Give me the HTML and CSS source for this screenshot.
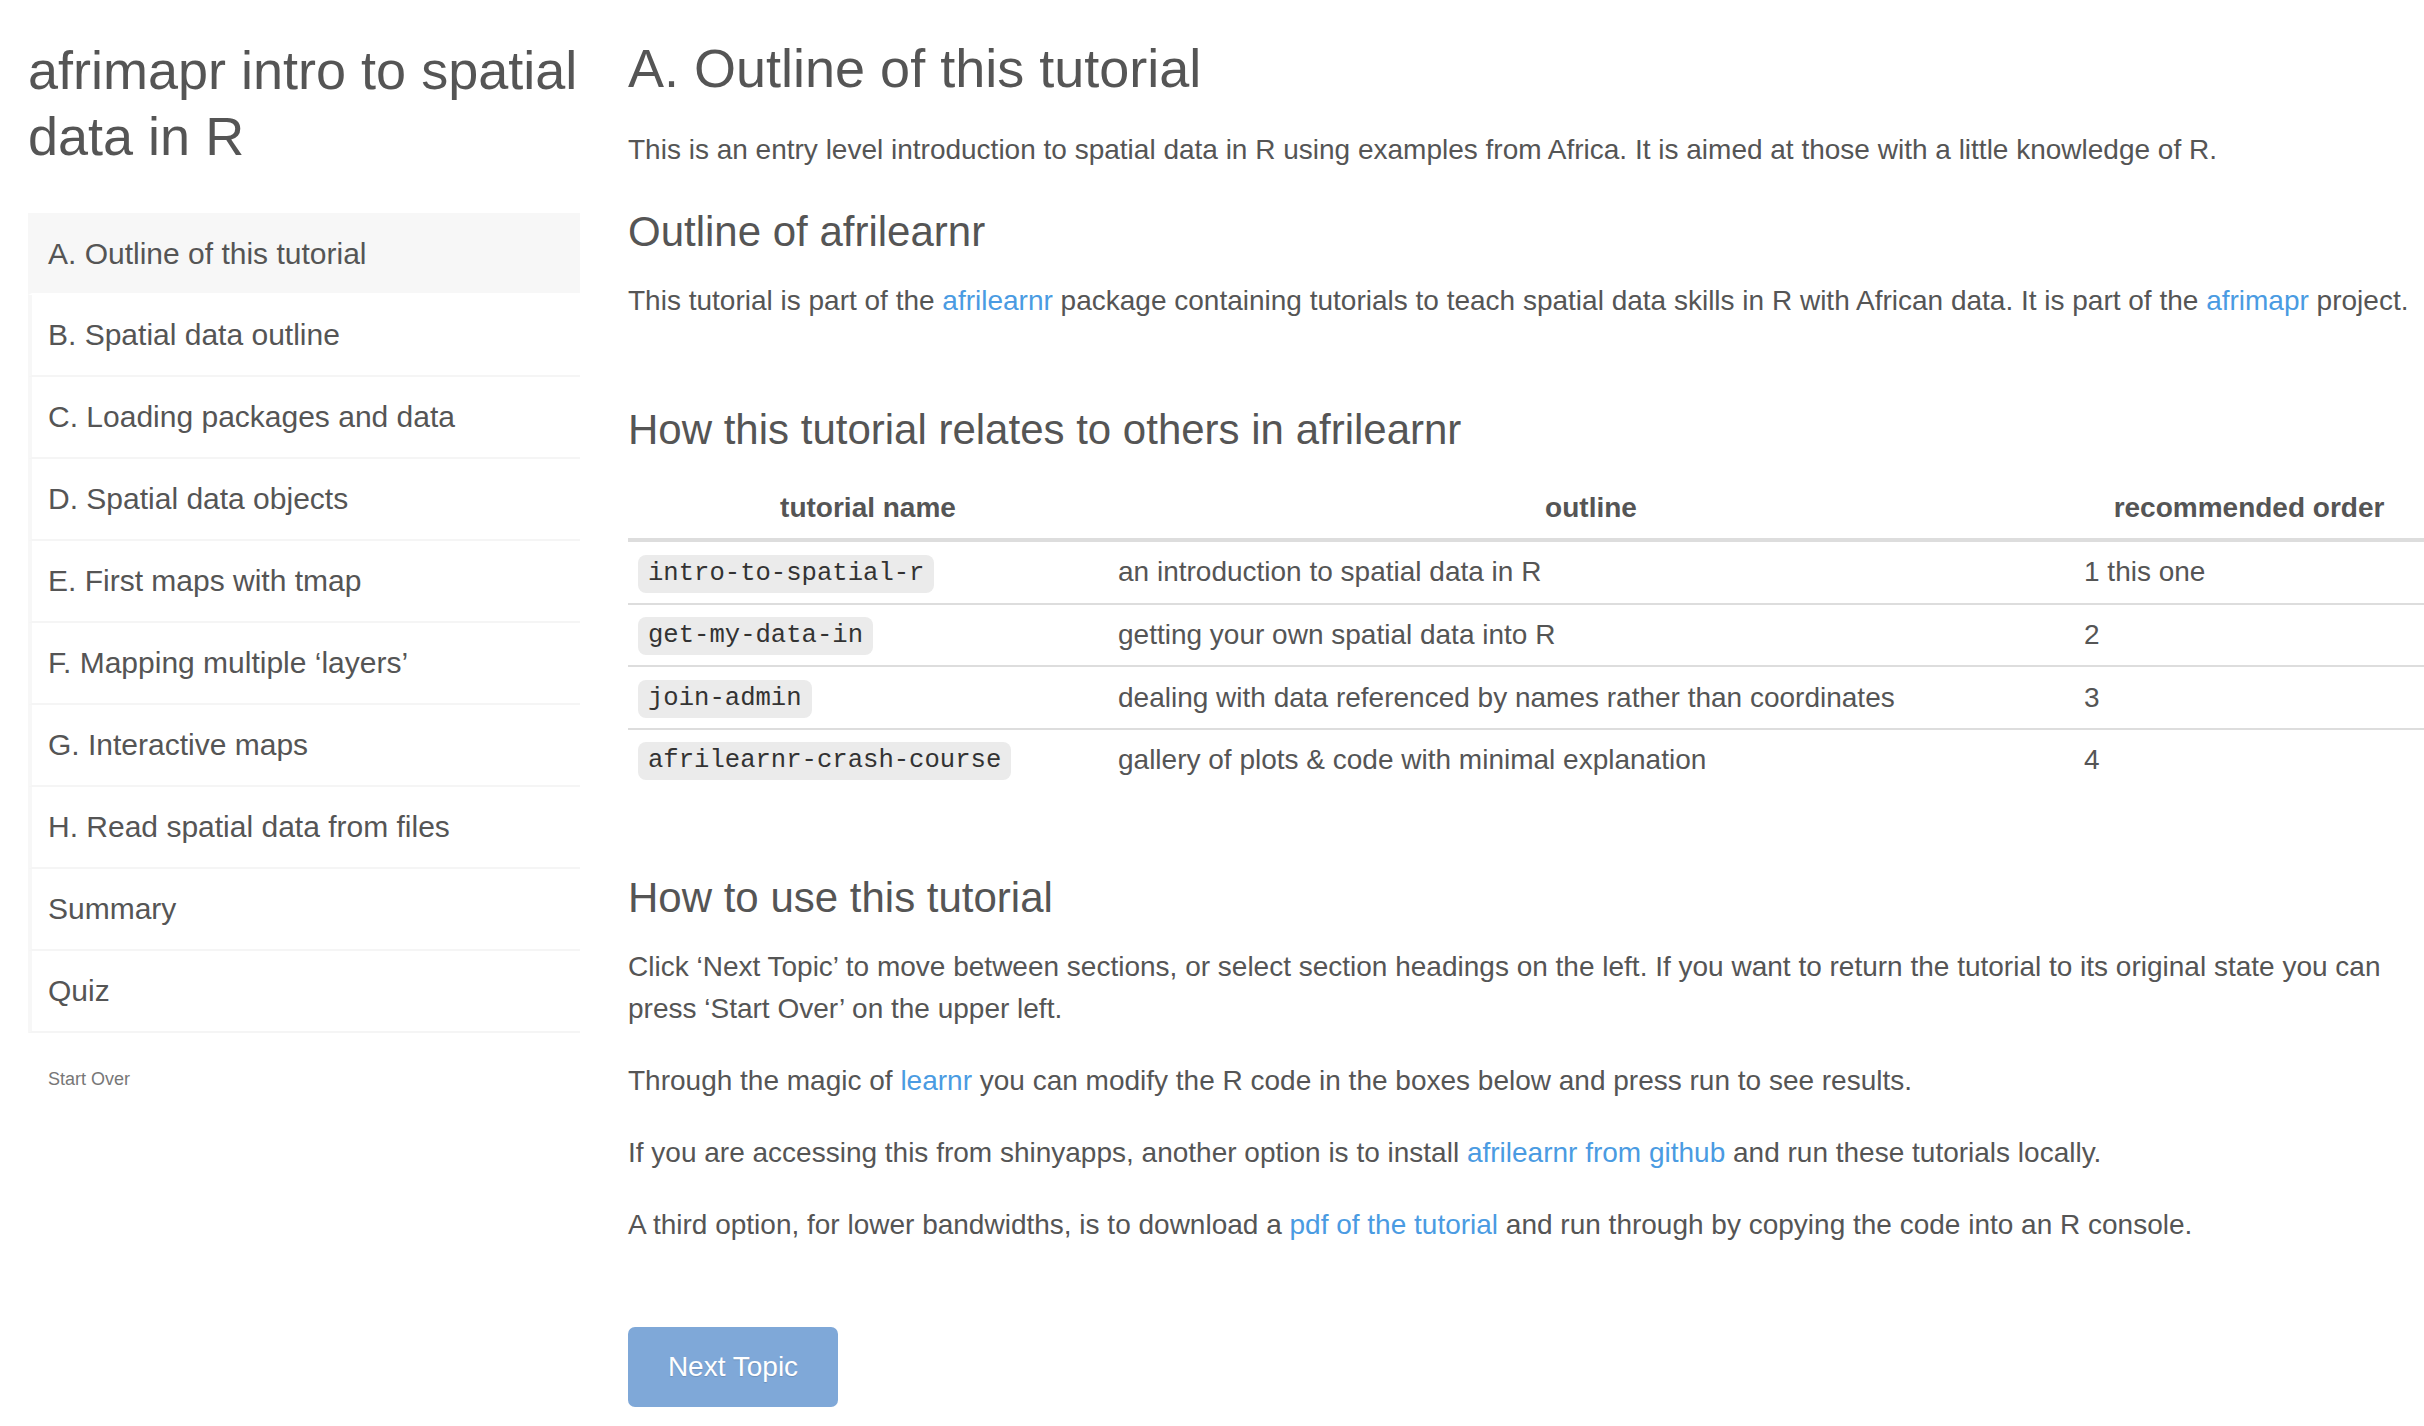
FILE: index.html
```html
<!DOCTYPE html>
<html>
<head>
<meta charset="utf-8">
<title>afrimapr intro to spatial data in R</title>
<link rel="stylesheet" href="styles.css">
</head>
<body>
<div class="page">
  <aside class="sidebar">
    <h1 class="site-title">afrimapr intro to spatial data in R</h1>
    <ul class="topics">
      <li class="topic active">A. Outline of this tutorial</li>
      <li class="topic">B. Spatial data outline</li>
      <li class="topic">C. Loading packages and data</li>
      <li class="topic">D. Spatial data objects</li>
      <li class="topic">E. First maps with tmap</li>
      <li class="topic">F. Mapping multiple ‘layers’</li>
      <li class="topic">G. Interactive maps</li>
      <li class="topic">H. Read spatial data from files</li>
      <li class="topic">Summary</li>
      <li class="topic">Quiz</li>
    </ul>
    <div class="start-over">Start Over</div>
  </aside>
  <main class="content">
    <h2 class="topic-title">A. Outline of this tutorial</h2>
    <p>This is an entry level introduction to spatial data in R using examples from Africa. It is aimed at those with a little knowledge of R.</p>
    <h3>Outline of afrilearnr</h3>
    <p>This tutorial is part of the <a href="#">afrilearnr</a> package containing tutorials to teach spatial data skills in R with African data. It is part of the <a href="#">afrimapr</a> project.</p>
    <h3 class="spaced">How this tutorial relates to others in afrilearnr</h3>
    <table class="tut-table">
      <thead>
        <tr><th class="c1">tutorial name</th><th class="c2">outline</th><th class="c3">recommended order</th></tr>
      </thead>
      <tbody>
        <tr><td><code>intro-to-spatial-r</code></td><td>an introduction to spatial data in R</td><td>1 this one</td></tr>
        <tr><td><code>get-my-data-in</code></td><td>getting your own spatial data into R</td><td>2</td></tr>
        <tr><td><code>join-admin</code></td><td>dealing with data referenced by names rather than coordinates</td><td>3</td></tr>
        <tr><td><code>afrilearnr-crash-course</code></td><td>gallery of plots &amp; code with minimal explanation</td><td>4</td></tr>
      </tbody>
    </table>
    <h3 class="spaced">How to use this tutorial</h3>
    <p>Click ‘Next Topic’ to move between sections, or select section headings on the left. If you want to return the tutorial to its original state you can press ‘Start Over’ on the upper left.</p>
    <p>Through the magic of <a href="#">learnr</a> you can modify the R code in the boxes below and press run to see results.</p>
    <p>If you are accessing this from shinyapps, another option is to install <a href="#">afrilearnr from github</a> and run these tutorials locally.</p>
    <p>A third option, for lower bandwidths, is to download a <a href="#">pdf of the tutorial</a> and run through by copying the code into an R console.</p>
    <div class="actions"><button class="next-btn">Next Topic</button></div>
  </main>
</div>
</body>
</html>
```

FILE: styles.css
```css
html, body {
  margin: 0;
  padding: 0;
  background: #ffffff;
  overflow: hidden;
}
body {
  font-family: "Liberation Sans", Arial, Helvetica, sans-serif;
  color: #555555;
  font-size: 28px;
  line-height: 42px;
}
.page {
  display: flex;
  align-items: flex-start;
  padding-left: 28px;
  gap: 48px;
}
.sidebar {
  width: 552px;
  flex: 0 0 552px;
}
.site-title {
  font-size: 54px;
  line-height: 66px;
  font-weight: normal;
  margin: 37px 0 44px 0;
  color: #555555;
}
.topics {
  list-style: none;
  margin: 0;
  padding: 0;
}
.topic {
  height: 80px;
  line-height: 80px;
  border-bottom: 2px solid #f5f5f5;
  border-left: 4px solid #f7f7f7;
  padding-left: 16px;
  font-size: 30px;
  color: #555555;
  white-space: nowrap;
}
.topic.active {
  background: #f7f7f7;
  border-bottom-color: #ffffff;
  line-height: 82px;
}
.start-over {
  margin-top: 34px;
  padding-left: 20px;
  font-size: 18px;
  line-height: 24px;
  color: #777777;
}
.content {
  flex: 1 1 auto;
  min-width: 0;
}
.topic-title {
  font-size: 54px;
  line-height: 60px;
  font-weight: normal;
  margin: 38px 0 31px 0;
  color: #555555;
}
h3 {
  font-size: 42px;
  line-height: 46px;
  font-weight: normal;
  margin: 38px 0 25px 0;
  color: #555555;
}
h3.spaced {
  margin-top: 85px;
}
p {
  margin: 0 0 30px 0;
}
a {
  color: #4a9be2;
  text-decoration: none;
}
.tut-table {
  width: 100%;
  border-collapse: collapse;
  border-spacing: 0;
  line-height: 40px;
}
.tut-table th {
  font-weight: bold;
  text-align: center;
  padding: 10px;
  border-bottom: 4px solid #dddddd;
}
.tut-table th.c1 { width: 460px; }
.tut-table th.c2 { width: 946px; }
.tut-table td {
  padding: 10px;
  height: 40px;
  text-align: left;
  border-top: 2px solid #dddddd;
  vertical-align: middle;
  white-space: nowrap;
}
.tut-table tbody tr:first-child td {
  border-top: 0;
}
code {
  display: inline-block;
  vertical-align: middle;
  font-family: "Liberation Mono", "DejaVu Sans Mono", monospace;
  font-size: 25.6px;
  line-height: 30px;
  background: #ebebeb;
  color: #333333;
  padding: 4px 10px;
  border-radius: 8px;
}
.actions {
  margin-top: 81px;
}
.next-btn {
  font-family: "Liberation Sans", Arial, Helvetica, sans-serif;
  font-size: 28px;
  line-height: 40px;
  width: 210px;
  height: 80px;
  color: #ffffff;
  background: #7fa8d8;
  border: 0;
  border-radius: 7px;
  text-shadow: 0 1px 1px rgba(0,0,0,0.15);
  padding: 0;
}
```
